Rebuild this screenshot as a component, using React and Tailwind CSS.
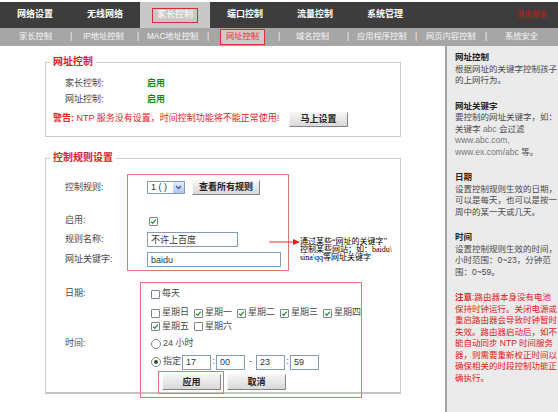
import React from 'react';

const tabs = ['网络设置', '无线网络', '家长控制', '端口控制', '流量控制', '系统管理'];

// widths measured from the reference, starting at x=19
const subItems = [
  { w: 51, t: '家长控制' },
  { w: 13, t: '|' },
  { w: 54, t: 'IP地址控制' },
  { w: 10, t: '|' },
  { w: 60, t: 'MAC地址控制' },
  { w: 13, t: '|' },
  { w: 58, t: '网址控制', active: true },
  { w: 18, t: '|' },
  { w: 51, t: '域名控制' },
  { w: 10, t: '|' },
  { w: 58, t: '应用程序控制' },
  { w: 11, t: '|' },
  { w: 59, t: '网页内容控制' },
  { w: 20, t: '|' },
  { w: 40, t: '系统安全' },
];

function Check({ checked }) {
  return (
    <span className="inline-flex w-[9px] h-[9px] shrink-0 items-center justify-center border border-[#7b8591] bg-white rounded-[1px]">
      {checked && (
        <svg width="7" height="7" viewBox="0 0 8 8">
          <path d="M1.3 4.2 L3.2 6 L6.7 1.8" fill="none" stroke="#2e9a2e" strokeWidth="1.5" />
        </svg>
      )}
    </span>
  );
}

function Radio({ checked }) {
  return (
    <span className="inline-flex w-[10px] h-[10px] shrink-0 items-center justify-center rounded-full border border-[#7b8591] bg-white">
      {checked && <span className="w-[4px] h-[4px] rounded-full bg-[#2b5a2b]" />}
    </span>
  );
}

function Btn({ children, className = '' }) {
  return (
    <button
      type="button"
      className={`flex items-center justify-center border border-t-[#f7f7f7] border-l-[#f7f7f7] border-r-[#858585] border-b-[#858585] bg-linear-to-b from-[#f5f5f5] to-[#d8d8d8] text-[9px] font-bold text-[#222] leading-none ${className}`}
    >
      {children}
    </button>
  );
}

function Field({ value, className = '' }) {
  return (
    <input
      readOnly
      value={value}
      className={`h-[15px] border border-[#7f9db9] bg-white px-[3px] text-[9px] text-[#333] outline-none ${className}`}
    />
  );
}

function Row({ label, className = '', children }) {
  return (
    <div className={`flex items-center pl-[19px] ${className}`}>
      <span className="w-[82px] shrink-0">{label}</span>
      {children}
    </div>
  );
}

function Day({ label, checked }) {
  return (
    <span className="flex w-[43px] shrink-0 items-center gap-[2px] whitespace-nowrap">
      <Check checked={checked} />
      {label}
    </span>
  );
}

export default function App() {
  return (
    <div className="w-[558px] h-[412px] overflow-hidden bg-white flex flex-col font-['Liberation_Sans','Noto_Sans_CJK_SC',sans-serif] text-[9px] text-[#4a4a4a]">
      {/* top menu */}
      <div className="h-[28px] pt-[2px] bg-white shrink-0">
        <div className="h-[26px] flex bg-[#3d3d3d] text-white font-bold">
          {tabs.map((t) => (
            <div
              key={t}
              className={`w-[70px] flex items-center justify-center ${t === '家长控制' ? 'bg-[#c8c8c8]' : ''}`}
            >
              {t === '家长控制' ? (
                <span className="h-[15px] px-[4px] flex items-center border border-[#d23030] font-normal">{t}</span>
              ) : (
                t
              )}
            </div>
          ))}
          <span className="ml-auto mr-[11px] self-center text-[7.5px] text-[#9c2626]">退出登录</span>
        </div>
      </div>

      {/* sub menu */}
      <div className="h-[18px] shrink-0 flex items-center pl-[19px] bg-[#a6a6a6] text-[8.25px] text-[#f6f6f6]">
        {subItems.map((s, i) => (
          <div key={i} style={{ width: s.w }} className="shrink-0 whitespace-nowrap">
            {s.active ? (
              <span className="w-[45px] h-[16px] flex items-center justify-center border border-[#e03030] bg-[#cbcbcb] text-[#f02a2a]">
                {s.t}
              </span>
            ) : (
              s.t
            )}
          </div>
        ))}
      </div>

      <div className="flex flex-1 min-h-0">
        <main className="relative w-[445px] shrink-0">
          {/* 网址控制 */}
          <fieldset className="ml-[45px] mt-[10px] w-[356px] border border-[#cdcdcd] pt-[8px] pb-[9px]">
            <legend className="ml-[4px] px-[3px] text-[10px] leading-[12px] font-bold text-[#dc2222]">网址控制</legend>
            <Row label="家长控制:" className="h-[16px]">
              <span className="font-bold text-[#168a16]">启用</span>
            </Row>
            <Row label="网址控制:" className="h-[16px]">
              <span className="font-bold text-[#168a16]">启用</span>
            </Row>
            <div className="mt-[3px] h-[16px] flex items-center pl-[7px]">
              <span className="w-[236px] shrink-0 whitespace-nowrap text-[#e02424]">
                <b>警告:</b> NTP 服务没有设置，时间控制功能将不能正常使用!
              </span>
              <Btn className="w-[59px] h-[15px]">马上设置</Btn>
            </div>
          </fieldset>

          {/* 控制规则设置 */}
          <fieldset className="ml-[45px] mt-[15px] w-[356px] border border-[#cdcdcd] border-b-2 border-b-[#c4c4c4] pt-[15px] pb-[2px]">
            <legend className="ml-[4px] px-[3px] text-[10px] leading-[12px] font-bold text-[#dc2222]">控制规则设置</legend>
            <Row label="控制规则:" className="h-[17px]">
              <div className="w-[38px] h-[13px] flex border border-[#7f9db9] bg-white">
                <span className="flex-1 pl-[3px] leading-[11px] text-[#333]">1 ( )</span>
                <span className="w-[11px] h-full flex items-center justify-center bg-linear-to-b from-[#e3ebfc] to-[#b3c7f0]">
                  <svg width="7" height="5" viewBox="0 0 7 5">
                    <path d="M1 1 L3.5 3.5 L6 1" fill="none" stroke="#4b5f8a" strokeWidth="1.4" />
                  </svg>
                </span>
              </div>
              <Btn className="ml-[7px] w-[68px] h-[15px]">查看所有规则</Btn>
            </Row>
            <Row label="启用:" className="mt-[18px] h-[14px]">
              <span className="ml-[2px] flex">
                <Check checked />
              </span>
            </Row>
            <Row label="规则名称:" className="mt-[4px] h-[15px]">
              <Field value="不许上百度" className="w-[91px] text-[#222]" />
            </Row>
            <Row label="网址关键字:" className="mt-[5px] h-[15px]">
              <Field value="baidu" className="w-[134px]" />
            </Row>

            <Row label="日期:" className="mt-[20px] h-[14px]">
              <span className="ml-[4px] flex items-center gap-[2px]">
                <Check /> 每天
              </span>
            </Row>
            <Row label="" className="mt-[5px] h-[14px]">
              <span className="ml-[4px] flex">
                <Day label="星期日" />
                <Day label="星期一" checked />
                <Day label="星期二" checked />
                <Day label="星期三" checked />
                <Day label="星期四" checked />
              </span>
            </Row>
            <Row label="" className="h-[13px]">
              <span className="ml-[4px] flex">
                <Day label="星期五" checked />
                <Day label="星期六" />
              </span>
            </Row>
            <Row label="时间:" className="mt-[4px] h-[14px]">
              <span className="ml-[4px] flex items-center gap-[2px]">
                <Radio /> 24 小时
              </span>
            </Row>
            <Row label="" className="mt-[4px] h-[14px]">
              <span className="ml-[4px] w-[31px] shrink-0 flex items-center gap-[2px]">
                <Radio checked /> 指定
              </span>
              <Field value="17" className="w-[29px] h-[14px]" />
              <span className="w-[5px] text-center">:</span>
              <Field value="00" className="w-[29px] h-[14px]" />
              <span className="w-[11px] text-center">-</span>
              <Field value="23" className="w-[29px] h-[14px]" />
              <span className="w-[5px] text-center">:</span>
              <Field value="59" className="w-[29px] h-[14px]" />
            </Row>
            <Row label="" className="mt-[5px] h-[16px]">
              <Btn className="ml-[15px] w-[59px] h-[16px]">应用</Btn>
              <Btn className="ml-[6px] w-[59px] h-[16px]">取消</Btn>
            </Row>
          </fieldset>

          {/* highlight boxes and callout */}
          <div className="absolute left-[127px] top-[128px] w-[162px] h-[97px] border border-[#e27474] pointer-events-none" />
          <div className="absolute left-[140px] top-[236px] w-[222px] h-[116px] border border-[#e27474] pointer-events-none" />
          <div className="absolute left-[158px] top-[325px] w-[66px] h-[23px] border border-[#e27474] pointer-events-none" />
          <svg className="absolute left-[268px] top-[192px]" width="33" height="8" viewBox="0 0 33 8">
            <line x1="1" y1="4" x2="26" y2="4" stroke="#e03030" strokeWidth="1" />
            <polygon points="25,1 32,4 25,7" fill="#e02020" />
          </svg>
          <div className="absolute left-[300px] top-[192px] text-[8px] leading-[8px] text-black whitespace-nowrap font-['Liberation_Serif','Noto_Sans_CJK_SC',serif]">
            通过某些“网址的关键字”
            <br />
            控制某些网站；如：baidu\
            <br />
            sina\qq等网址关键字
          </div>
        </main>

        {/* help panel */}
        <aside className="w-[113px] shrink-0 border-l-2 border-[#a2a2a2] bg-[#ebebeb] pl-[8px] pt-[6px] text-[8.5px] leading-[11.5px] text-[#4a4a4a] whitespace-nowrap">
          <p className="font-bold text-[#222]">网址控制</p>
          <p>
            根据网址的关键字控制孩子
            <br />
            的上网行为。
          </p>
          <p className="mt-[14px] font-bold text-[#222]">网址关键字</p>
          <p>
            要控制的网址关键字，如：
            <br />
            关键字 <span className="text-[#777]">abc</span> 会过滤
            <br />
            <span className="text-[#777]">www.abc.com,</span>
            <br />
            <span className="text-[#777]">www.ex.com/abc</span> 等。
          </p>
          <p className="mt-[14px] font-bold text-[#222]">日期</p>
          <p>
            设置控制规则生效的日期，
            <br />
            可以是每天，也可以是按一
            <br />
            周中的某一天或几天。
          </p>
          <p className="mt-[14px] font-bold text-[#222]">时间</p>
          <p>
            设置控制规则生效的时间，
            <br />
            小时范围：0~23，分钟范
            <br />
            围：0~59。
          </p>
          <p className="mt-[14px] text-[#e02020]">
            <b>注意</b>:路由器本身没有电池
            <br />
            保持时钟运行。关闭电源或
            <br />
            重启路由器会导致时钟暂时
            <br />
            失效。路由器启动后，如不
            <br />
            能自动同步 NTP 时间服务
            <br />
            器，则需要重新校正时间以
            <br />
            确保相关的时段控制功能正
            <br />
            确执行。
          </p>
        </aside>
      </div>
    </div>
  );
}
